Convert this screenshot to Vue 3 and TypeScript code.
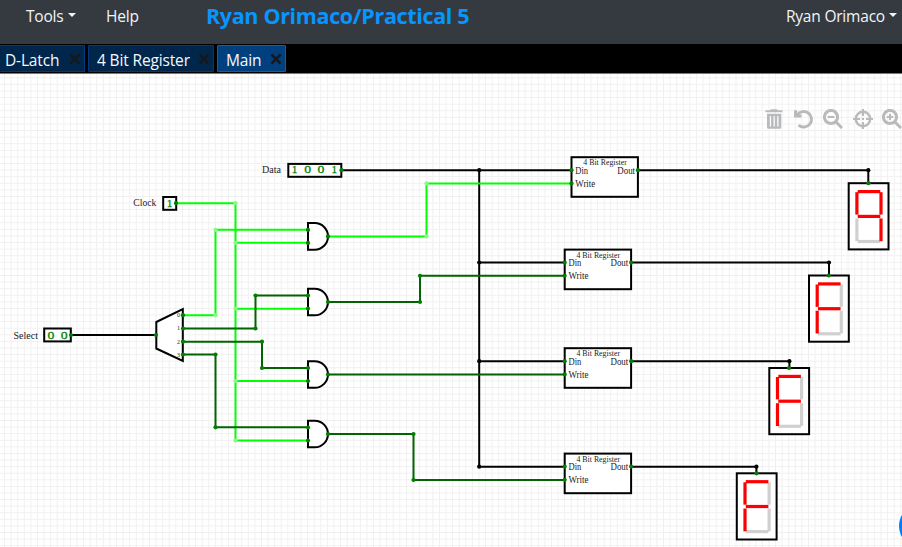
<script setup lang="ts">
type Point = [number, number]
interface Wire { kind: 'on' | 'off' | 'bus'; points: string }
interface Label { text: string; x: number; y: number; width: number }
interface Display { x: number; y: number; lit: string }

const tabs = [
  { name: 'D-Latch', active: false },
  { name: '4 Bit Register', active: false },
  { name: 'Main', active: true },
]

const wires: Wire[] = [
  { kind: 'bus', points: '341.5,170.2 572,170.2' },
  { kind: 'bus', points: '479.2,170.2 479.2,466.7 565,466.7' },
  { kind: 'bus', points: '479.2,262.5 565,262.5' },
  { kind: 'bus', points: '479.2,361.2 565,361.2' },
  { kind: 'bus', points: '71,335 156,335' },
  { kind: 'bus', points: '638,170.2 868.3,170.2 868.3,183' },
  { kind: 'bus', points: '631.5,262.5 829,262.5 829,276' },
  { kind: 'bus', points: '631.5,361.2 789.4,361.2 789.4,368' },
  { kind: 'bus', points: '631.5,466.7 756.4,466.7 756.4,473.5' },
  { kind: 'on', points: '176,203.2 235.5,203.2 235.5,440.5 308,440.5' },
  { kind: 'on', points: '183,315.2 215.5,315.2 215.5,229.8 308,229.8' },
  { kind: 'on', points: '235.5,242.8 308,242.8' },
  { kind: 'on', points: '235.5,308.7 308,308.7' },
  { kind: 'on', points: '235.5,381 308,381' },
  { kind: 'on', points: '328,236.4 426.5,236.4 426.5,183.4 572,183.4' },
  { kind: 'off', points: '183,328.5 255.5,328.5 255.5,295.5 308,295.5' },
  { kind: 'off', points: '183,341.7 262,341.7 262,368 308,368' },
  { kind: 'off', points: '183,354.5 215.5,354.5 215.5,427.3 308,427.3' },
  { kind: 'off', points: '328,302 420,302 420,275.8 565,275.8' },
  { kind: 'off', points: '328,374.5 565,374.5' },
  { kind: 'off', points: '328,434 413.5,434 413.5,480 565,480' },
]

const gates = [236.4, 302, 374.5, 434]
const registers: Point[] = [[571.5, 157.2], [564.7, 249.6], [564.7, 348.2], [564.7, 453.6]]
const displays: Display[] = [
  { x: 848.7, y: 183.2, lit: 'abcfg' },
  { x: 809, y: 275.5, lit: 'aefg' },
  { x: 769.3, y: 368, lit: 'aefg' },
  { x: 736.8, y: 473.3, lit: 'aefg' },
]
const segments: Record<string, string> = {
  a: 'M9 8.4H31.6', f: 'M8.2 9V31.4', b: 'M32.3 9V31.4',
  e: 'M8.2 35.2V58', c: 'M32.3 35.2V58', d: 'M9 58.3H31.6', g: 'M9 33.2H31.6',
}
const segmentsOf = (lit: string) =>
  Object.keys(segments).sort((p, q) => Number(lit.includes(p)) - Number(lit.includes(q)))

const busDots: Point[] = [[479.2, 170.2], [479.2, 262.5], [479.2, 361.2], [479.2, 466.7], [868.3, 170.2], [829, 262.5], [789.4, 361.2], [756.4, 466.7]]
const onDots: Point[] = [[235.5, 203.2], [215.5, 229.8], [235.5, 242.8], [215.5, 315.2], [235.5, 308.7], [235.5, 381], [235.5, 440.5], [426.5, 183.4], [426.5, 236.4]]
const offDots: Point[] = [[255.5, 328.5], [255.5, 295.5], [262, 341.7], [262, 368], [215.5, 354.5], [215.5, 427.3], [420, 302], [420, 275.8], [413.5, 434], [413.5, 480]]
const pins: Point[] = [
  [341.5, 170.2], [176, 203.2], [71, 335], [156, 335],
  [183, 315.2], [183, 328.5], [183, 341.7], [183, 354.5],
  ...gates.flatMap((y): Point[] => [[308, y - 6.5], [308, y + 6.5], [328, y]]),
  ...registers.flatMap(([x, y]): Point[] => [[x, y + 13], [x, y + 26.2], [x + 66.4, y + 13]]),
  ...displays.map((d): Point => [d.x + 19.7, d.y]),
]

const labels: Label[] = [
  { text: 'Data', x: 262, y: 173.3, width: 19 },
  { text: 'Clock', x: 133.3, y: 206.3, width: 23 },
  { text: 'Select', x: 13.5, y: 338.6, width: 24.5 },
]
const bits = [
  { v: '1', x: 294.5, y: 173.4 }, { v: '0', x: 307.6, y: 173.4 },
  { v: '0', x: 321, y: 173.4 }, { v: '1', x: 334.2, y: 173.4 },
  { v: '1', x: 169.5, y: 206.5 },
  { v: '0', x: 51, y: 338.5 }, { v: '0', x: 64.3, y: 338.5 },
]
</script>

<template>
  <div class="app">
    <nav class="navbar">
      <span class="item tools">Tools<i class="caret" /></span>
      <span class="item help">Help</span>
      <span class="title">Ryan Orimaco/Practical 5</span>
      <span class="item user">Ryan Orimaco<i class="caret" /></span>
    </nav>
    <div class="tabs">
      <div v-for="t in tabs" :key="t.name" class="tab" :class="{ active: t.active }">
        <span>{{ t.name }}</span>
        <svg class="close" viewBox="0 0 12 12"><path d="M1.5 1.5 10.5 10.5M10.5 1.5 1.5 10.5" /></svg>
      </div>
    </div>
    <main class="canvas">
      <svg class="circuit" viewBox="0 73 902 474">
        <defs>
          <pattern id="grid" x="1.2" y="74.5" width="6.59" height="6.59" patternUnits="userSpaceOnUse">
            <path d="M3.3 0V6.59M0 3.3H6.59" class="gridline" />
          </pattern>
        </defs>
        <rect x="0" y="74" width="902" height="473" fill="url(#grid)" />

        <polyline v-for="(w, i) in wires" :key="'w' + i" :points="w.points" class="wire" :class="w.kind" />

        <rect class="box" x="288.3" y="163.9" width="53" height="12.9" />
        <rect class="box" x="163.2" y="197" width="13" height="12.8" />
        <rect class="box" x="44.2" y="328.5" width="26.6" height="12.9" />
        <path class="box" d="M156.3 322 182.8 309V361L156.3 348.5Z" />
        <text v-for="n in 4" :key="'m' + n" class="muxno" x="178.4" :y="304.2 + n * 13.1">{{ n - 1 }}</text>

        <path v-for="y in gates" :key="'g' + y" class="box gate" :d="`M308 ${y - 13.3}H314.7A13.3 13.3 0 0 1 314.7 ${y + 13.3}H308Z`" />

        <g v-for="([x, y], i) in registers" :key="'r' + i" :transform="`translate(${x} ${y})`">
          <rect class="box" x="0" y="0" width="66.4" height="39.6" />
          <text class="small" x="11.8" y="8.2" textLength="43.5" lengthAdjust="spacingAndGlyphs">4 Bit Register</text>
          <text class="label" x="3.8" y="16.4" textLength="12.8" lengthAdjust="spacingAndGlyphs">Din</text>
          <text class="label" x="45.8" y="16.4" textLength="17.8" lengthAdjust="spacingAndGlyphs">Dout</text>
          <text class="label" x="3.8" y="29.5" textLength="20" lengthAdjust="spacingAndGlyphs">Write</text>
        </g>

        <g v-for="(d, i) in displays" :key="'d' + i" :transform="`translate(${d.x} ${d.y})`">
          <rect class="box" x="0" y="0" width="39.8" height="66.2" />
          <path v-for="s in segmentsOf(d.lit)" :key="s" class="segment" :class="{ lit: d.lit.includes(s) }" :d="segments[s]" />
        </g>

        <text v-for="l in labels" :key="l.text" class="label" :x="l.x" :y="l.y" :textLength="l.width" lengthAdjust="spacingAndGlyphs">{{ l.text }}</text>
        <text v-for="(b, i) in bits" :key="'b' + i" class="bit" :transform="`translate(${b.x} ${b.y}) scale(${b.v === '0' ? 1.3 : 1.05} 1)`">{{ b.v }}</text>

        <circle v-for="([x, y], i) in busDots" :key="'bd' + i" class="dot-bus" :cx="x" :cy="y" r="2.1" />
        <circle v-for="([x, y], i) in onDots" :key="'od' + i" class="dot-on" :cx="x" :cy="y" r="2.1" />
        <circle v-for="([x, y], i) in offDots" :key="'fd' + i" class="dot-off" :cx="x" :cy="y" r="2.1" />
        <circle v-for="([x, y], i) in pins" :key="'p' + i" class="dot-off" :cx="x" :cy="y" r="2.1" />
      </svg>

      <div class="tools-overlay">
        <svg viewBox="0 0 20 20">
          <path d="M1.5 2.3H18.5M6.5 1.2H13.5" class="thin" />
          <path fill-rule="evenodd" class="solid" d="M3 4.8H17.3V18.2Q17.3 19.8 15.7 19.8H4.6Q3 19.8 3 18.2ZM5.8 7V17.4H7.1V7ZM9.5 7V17.4H10.8V7ZM13.2 7V17.4H14.5V7Z" />
        </svg>
        <svg viewBox="0 0 20 20">
          <path d="M3.2 6A7.8 7.8 0 1 1 4.6 16.2" class="stroke" />
          <path d="M0 1.3V8.4H7.6V5.6H3.2V1.3Z" class="solid" />
        </svg>
        <svg viewBox="0 0 20 20">
          <circle cx="8" cy="8" r="6.6" class="stroke" /><path d="M13 13 19 19" class="stroke" /><path d="M4.7 8H11.3" class="thin" />
        </svg>
        <svg viewBox="0 0 20 20">
          <circle cx="10" cy="10" r="7.2" class="ring" /><path d="M10 0V7M10 13V20M0 10H7M13 10H20" class="thin" /><circle cx="10" cy="10" r="1.2" class="solid" />
        </svg>
        <svg viewBox="0 0 20 20">
          <circle cx="8" cy="8" r="6.6" class="stroke" /><path d="M13 13 19 19" class="stroke" /><path d="M4.7 8H11.3M8 4.7V11.3" class="thin" />
        </svg>
      </div>
      <div class="help-bubble" />
    </main>
  </div>
</template>

<style>
body { margin: 0; overflow: hidden; }
</style>

<style scoped>
.app { width: 902px; height: 547px; display: flex; flex-direction: column; overflow: hidden; background: #fff; font-family: "Open Sans", "Noto Sans", sans-serif; }
.navbar { box-sizing: border-box; height: 44px; flex: none; display: flex; align-items: flex-start; background: #343a40; color: #f3f4f5; padding: 5px 5px 0 26px; white-space: nowrap; }
.item { font-size: 15.5px; line-height: 23px; letter-spacing: -.2px; display: flex; align-items: center; }
.tools { width: 80px; }
.help { width: 100px; }
.title { color: #0795ff; font-weight: 700; font-size: 21.5px; line-height: 21px; letter-spacing: -.35px; }
.user { margin-left: auto; }
.caret { width: 0; height: 0; margin: -4px 0 0 4px; border: 4.8px solid transparent; border-top-color: currentColor; border-bottom: 0; }
.tabs { box-sizing: border-box; height: 30px; flex: none; display: flex; gap: 3px; padding: 1px 0 2px; background: #000; border-bottom: 1px solid #777; }
.tab { box-sizing: border-box; display: flex; align-items: center; justify-content: space-between; height: 27px; border: 1px solid #003b78; border-radius: 1px; background: #00264b; color: #f7f9fb; font-size: 15.5px; letter-spacing: -.15px; padding: 2px 3px 0 8px; width: 126px; white-space: nowrap; }
.tab:first-child { width: 85px; padding-left: 5px; border-left: 0; }
.tab.active { width: 69px; background: #00407f; border-color: #0064bf; }
.close { width: 12px; height: 12px; margin-top: -1px; fill: none; stroke: #15191d; stroke-width: 2.5; }
.canvas { position: relative; flex: 1; overflow: hidden; }
.circuit { display: block; width: 902px; height: 474px; margin-top: -1px; font-family: "Liberation Serif", serif; }
.gridline { fill: none; stroke: #f0f0f0; stroke-width: 1; }
.wire { fill: none; stroke-width: 2; }
.bus { stroke: #000; }
.on { stroke: #0f0; }
.off { stroke: #006400; }
.box { fill: #fff; stroke: #000; stroke-width: 2; }
.label { font-size: 9.4px; fill: #222; }
.small { font-size: 7.4px; fill: #222; }
.muxno { font-size: 6px; fill: #222; text-anchor: middle; }
.bit { font-size: 10.6px; fill: #008000; stroke: #008000; stroke-width: .25; text-anchor: middle; }
.segment { fill: none; stroke: #d0d0d0; stroke-width: 3.2; }
.segment.lit { stroke: #f00; }
.dot-bus { fill: #000; }
.dot-on { fill: #8cf58c; }
.dot-off { fill: #008000; }
.tools-overlay { position: absolute; top: 35px; left: 764px; display: flex; gap: 9.5px; }
.tools-overlay svg { width: 20px; height: 20px; flex: none; fill: none; }
.tools-overlay .stroke { stroke: #b9babb; stroke-width: 3; }
.tools-overlay .ring { stroke: #b9babb; stroke-width: 2.4; }
.tools-overlay .thin { stroke: #b9babb; stroke-width: 2.1; }
.tools-overlay .solid { fill: #b9babb; }
.help-bubble { position: absolute; left: 899px; top: 430px; width: 44px; height: 44px; border-radius: 50%; background: #007bff; }
</style>
